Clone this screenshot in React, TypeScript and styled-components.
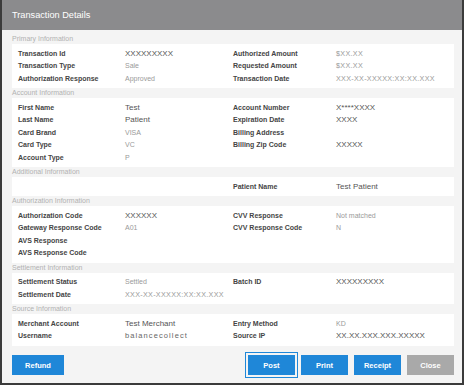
import React from 'react';
import styled, { createGlobalStyle } from 'styled-components';

const GlobalStyle = createGlobalStyle`
    html, body {
        margin: 0;
        padding: 0;
        background: #ffffff;
    }
    body {
        font-family: "Liberation Sans", Arial, sans-serif;
    }
`;

const Modal = styled.div`
    box-sizing: border-box;
    width: 464px;
    height: 385px;
    display: flex;
    flex-direction: column;
    background-color: #f4f4f4;
    border-left: 2px solid #3b3b3b;
    border-right: 2px solid #3b3b3b;
    border-bottom: 2px solid #3b3b3b;
`;

const TitleBar = styled.div`
    height: 30px;
    flex-shrink: 0;
    display: flex;
    align-items: center;
    padding-left: 10px;
    background-color: #8b8b8d;
    color: #ffffff;
    font-size: 9.2px;
`;

const Body = styled.div`
    padding: 4px 8px 0 10px;
`;

const SectionHeader = styled.div`
    height: 10px;
    line-height: 10px;
    font-size: 7px;
    color: #b2b2b2;
`;

const Panel = styled.div`
    display: grid;
    grid-template-columns: 107px 108px 103px 1fr;
    grid-auto-rows: 12.5px;
    align-items: center;
    padding: 2.75px 6px 3.75px;
    background-color: #ffffff;
`;

const Label = styled.div`
    font-size: 7px;
    font-weight: 700;
    color: #454545;
    white-space: nowrap;
`;

type Tone = 'dark' | 'light' | 'code' | 'spaced';

const Value = styled.div<{ tone: Tone }>`
    white-space: nowrap;
    color: ${(p) => (p.tone === 'dark' ? '#555555' : p.tone === 'spaced' ? '#666666' : '#9a9a9a')};
    font-size: ${(p) => (p.tone === 'dark' ? '8px' : p.tone === 'code' ? '7.2px' : '7px')};
    letter-spacing: ${(p) => (p.tone === 'spaced' ? '1.1px' : p.tone === 'code' ? '0.3px' : '0')};
    ${(p) => p.tone === 'spaced' && 'font-size: 7.5px;'}
`;

const Footer = styled.div`
    display: flex;
    justify-content: space-between;
    align-items: center;
    padding: 9.5px 8px 0 10px;
`;

const ButtonGroup = styled.div`
    display: flex;
    gap: 6px;
`;

const Button = styled.button<{ variant?: 'primary' | 'muted'; focused?: boolean; wide?: boolean }>`
    box-sizing: border-box;
    width: ${(p) => (p.wide ? '52px' : '47px')};
    height: 20px;
    padding: 0;
    border: none;
    background-color: ${(p) => (p.variant === 'muted' ? '#a9a9a9' : '#1f87d8')};
    color: #ffffff;
    font-family: "Liberation Sans", Arial, sans-serif;
    font-size: 7.5px;
    font-weight: 700;
    ${(p) => p.focused && 'outline: 1px solid #1f87d8; outline-offset: 2px;'}
`;

type Pair = [string, string, Tone?] | null;
type Row = [Pair, Pair];

interface Section {
    title: string;
    rows: Row[];
}

const DATE = 'XXX-XX-XXXXX:XX:XX.XXX';

const sections: Section[] = [
    {
        title: 'Primary Information',
        rows: [
            [['Transaction Id', 'XXXXXXXXX', 'dark'], ['Authorized Amount', '$XX.XX', 'code']],
            [['Transaction Type', 'Sale'], ['Requested Amount', '$XX.XX', 'code']],
            [['Authorization Response', 'Approved'], ['Transaction Date', DATE, 'code']],
        ],
    },
    {
        title: 'Account Information',
        rows: [
            [['First Name', 'Test', 'dark'], ['Account Number', 'X****XXXX', 'dark']],
            [['Last Name', 'Patient', 'dark'], ['Expiration Date', 'XXXX', 'dark']],
            [['Card Brand', 'VISA'], ['Billing Address', '']],
            [['Card Type', 'VC'], ['Billing Zip Code', 'XXXXX', 'dark']],
            [['Account Type', 'P'], null],
        ],
    },
    {
        title: 'Additional Information',
        rows: [[null, ['Patient Name', 'Test Patient', 'dark']]],
    },
    {
        title: 'Authorization Information',
        rows: [
            [['Authorization Code', 'XXXXXX', 'dark'], ['CVV Response', 'Not matched']],
            [['Gateway Response Code', 'A01'], ['CVV Response Code', 'N']],
            [['AVS Response', ''], null],
            [['AVS Response Code', ''], null],
        ],
    },
    {
        title: 'Settlement Information',
        rows: [
            [['Settlement Status', 'Settled'], ['Batch ID', 'XXXXXXXXX', 'dark']],
            [['Settlement Date', DATE, 'code'], null],
        ],
    },
    {
        title: 'Source Information',
        rows: [
            [['Merchant Account', 'Test Merchant', 'dark'], ['Entry Method', 'KD']],
            [['Username', 'balancecollect', 'spaced'], ['Source IP', 'XX.XX.XXX.XXX.XXXXX', 'dark']],
        ],
    },
];

const renderPair = (pair: Pair, key: string) => {
    if (!pair) {
        return [<div key={key + 'l'} />, <div key={key + 'v'} />];
    }
    const [label, value, tone] = pair;
    return [
        <Label key={key + 'l'}>{label}</Label>,
        <Value key={key + 'v'} tone={tone || 'light'}>{value}</Value>,
    ];
};

const App = () => {
    return (
        <>
            <GlobalStyle />
            <Modal>
                <TitleBar>Transaction Details</TitleBar>
                <Body>
                    {sections.map((section) => (
                        <div key={section.title}>
                            <SectionHeader>{section.title}</SectionHeader>
                            <Panel>
                                {section.rows.map((row, i) => [
                                    ...renderPair(row[0], `${i}a`),
                                    ...renderPair(row[1], `${i}b`),
                                ])}
                            </Panel>
                        </div>
                    ))}
                </Body>
                <Footer>
                    <Button wide>Refund</Button>
                    <ButtonGroup>
                        <Button focused>Post</Button>
                        <Button>Print</Button>
                        <Button>Receipt</Button>
                        <Button variant="muted">Close</Button>
                    </ButtonGroup>
                </Footer>
            </Modal>
        </>
    );
};

export default App;
